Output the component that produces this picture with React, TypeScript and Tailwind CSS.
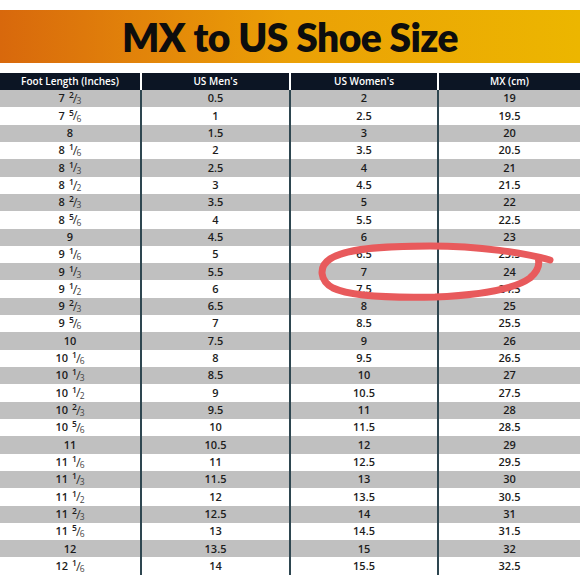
import React from "react";

const feet: [string, string | null][] = [
  ["7", "2/3"], ["7", "5/6"], ["8", null], ["8", "1/6"], ["8", "1/3"], ["8", "1/2"], ["8", "2/3"], ["8", "5/6"],
  ["9", null], ["9", "1/6"], ["9", "1/3"], ["9", "1/2"], ["9", "2/3"], ["9", "5/6"],
  ["10", null], ["10", "1/6"], ["10", "1/3"], ["10", "1/2"], ["10", "2/3"], ["10", "5/6"],
  ["11", null], ["11", "1/6"], ["11", "1/3"], ["11", "1/2"], ["11", "2/3"], ["11", "5/6"],
  ["12", null], ["12", "1/6"],
];

const fmt = (n: number) => (Number.isInteger(n) ? String(n) : n.toFixed(1));

function Foot({ whole, frac }: { whole: string; frac: string | null }) {
  if (!frac) return <span>{whole}</span>;
  const [a, b] = frac.split("/");
  return (
    <span className="inline-flex items-center">
      <span>{whole}</span>
      <span className="ml-[4px] inline-flex items-center leading-none">
        <span className="relative top-[-3px] text-[8.5px]">{a}</span>
        <span className="text-[13px] font-normal text-[#333] mx-[-1px]">/</span>
        <span className="relative top-[3px] text-[8.5px] font-normal text-[#444]">{b}</span>
      </span>
    </span>
  );
}

export default function App() {
  return (
    <div
      className="relative w-[580px] h-[579px] bg-white overflow-hidden"
      style={{ fontFamily: "'Open Sans', 'Liberation Sans', sans-serif" }}
    >
      <div className="pt-[10px]">
        <div className="h-[53px] flex items-center justify-center bg-gradient-to-r from-[#d8680c] via-[#eba006] to-[#ecb600]">
          <h1 className="text-[39px] leading-none text-[#0d0d0d] tracking-[-0.6px] mt-[2px]" style={{ fontFamily: "Lato, 'Open Sans', sans-serif", fontWeight: 800 }}>
            MX to US Shoe Size
          </h1>
        </div>
      </div>
      <div className="mt-[10px]">
        <div className="grid grid-cols-[142px_149px_148px_1fr] h-[17px] text-[10px] font-semibold text-white">
          <div className="bg-[#0c1524] border-r-2 border-white flex items-center justify-center">Foot Length (Inches)</div>
          <div className="bg-[#0c1524] border-r-2 border-white flex items-center justify-center">US Men's</div>
          <div className="bg-[#0c1524] border-r-2 border-white flex items-center justify-center">US Women's</div>
          <div className="bg-[#0c1524] flex items-center justify-center">MX (cm)</div>
        </div>
        <div className="flex flex-col text-[11px] font-semibold text-[#1c1c1c]">
          {feet.map(([w, f], i) => (
            <div
              key={i}
              className={`grid grid-cols-[142px_149px_148px_1fr] h-[17.32px] ${i % 2 === 0 ? "bg-[#c0c0c0]" : "bg-white"}`}
            >
              <div className="border-r-2 border-[#2e4650] flex items-center justify-center">
                <Foot whole={w} frac={f} />
              </div>
              <div className="border-r-2 border-[#2e4650] flex items-center justify-center">{fmt(0.5 + i * 0.5)}</div>
              <div className="border-r-2 border-[#2e4650] flex items-center justify-center">{fmt(2 + i * 0.5)}</div>
              <div className="flex items-center justify-center">{fmt(19 + i * 0.5)}</div>
            </div>
          ))}
        </div>
      </div>
      <svg className="absolute inset-0 pointer-events-none" width="580" height="579" viewBox="0 0 580 579">
        <path
          d="M 550 260 C 525 253, 480 246, 430 246 C 380 246, 345 249, 330 259 C 318 267, 320 281, 333 288 C 350 296, 390 298, 435 297 C 480 295, 515 289, 530 278 C 538 271, 540 264, 538 258"
          fill="none"
          stroke="#e85a5c"
          strokeWidth="7"
          strokeLinecap="round"
          strokeLinejoin="round"
        />
      </svg>
    </div>
  );
}
